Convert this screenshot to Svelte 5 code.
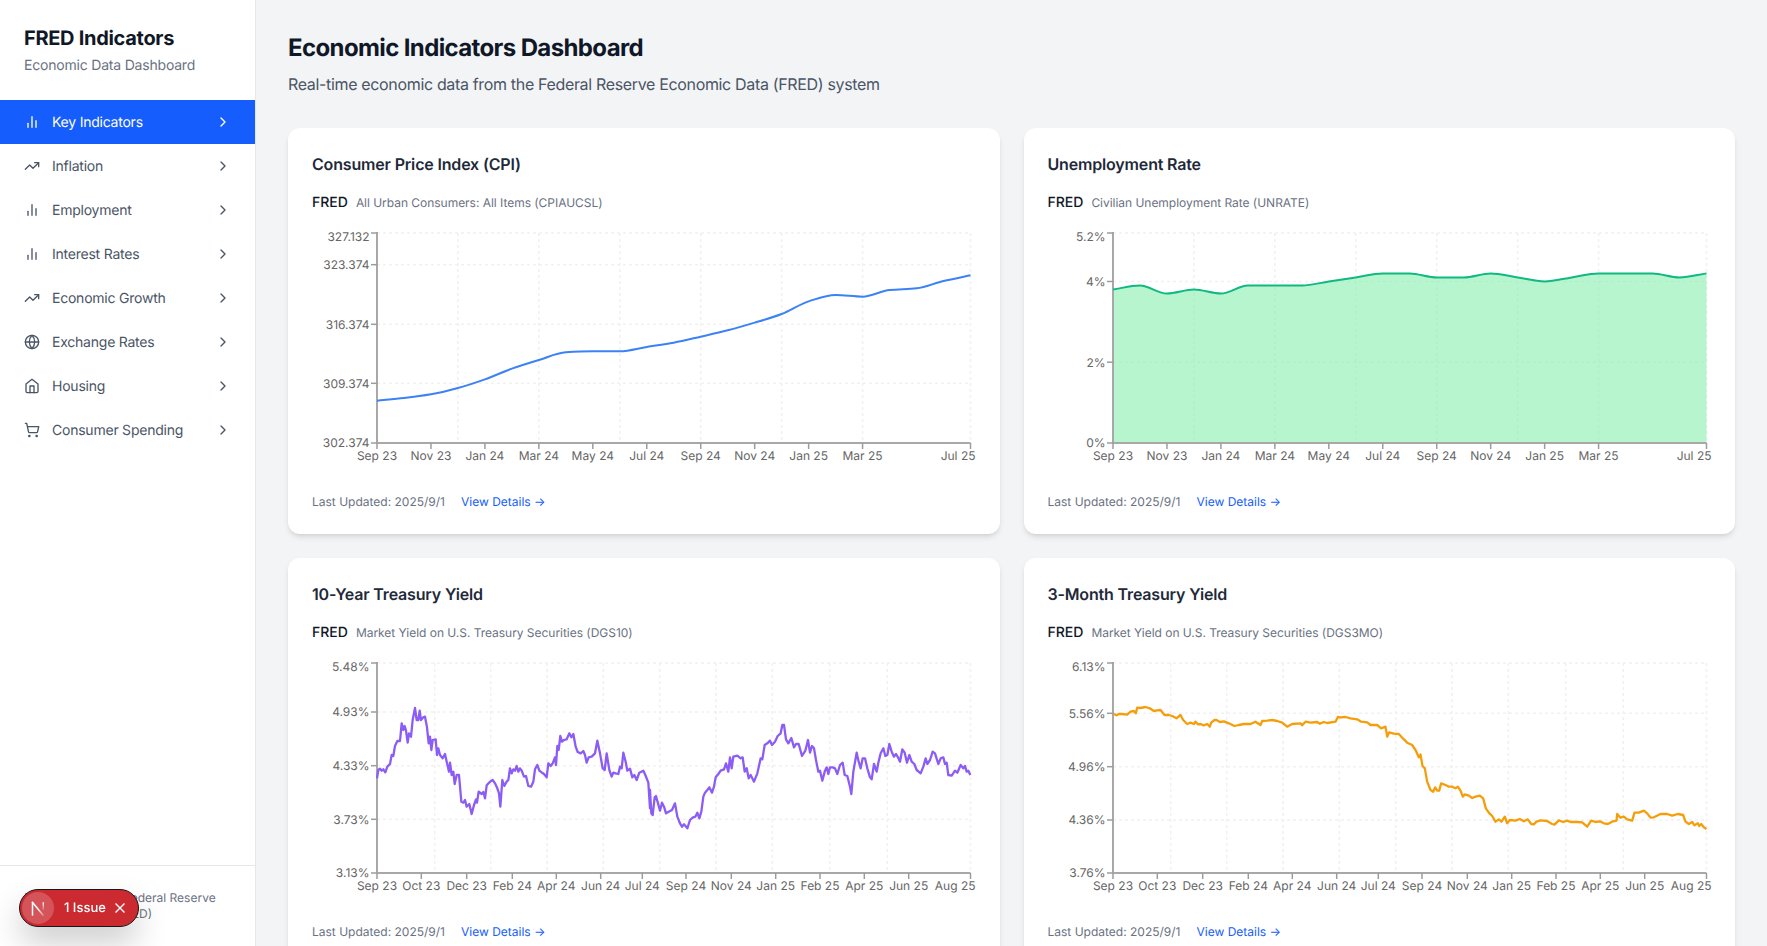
<script>
  const nav = [
    ['Key Indicators', 'bars'], ['Inflation', 'trend'], ['Employment', 'bars'], ['Interest Rates', 'bars'],
    ['Economic Growth', 'trend'], ['Exchange Rates', 'globe'], ['Housing', 'home'], ['Consumer Spending', 'cart']
  ];

  const W = 663.5, L = 65, R = 658.5, T = 5, B = 215;
  const step = (R - L) / 22;
  const idx = (i) => L + i * step;

  function monotone(pts) {
    const n = pts.length;
    const d = [], m = [];
    for (let i = 0; i < n - 1; i++) d.push((pts[i + 1][1] - pts[i][1]) / (pts[i + 1][0] - pts[i][0]));
    m[0] = d[0];
    for (let i = 1; i < n - 1; i++) {
      m[i] = d[i - 1] * d[i] <= 0 ? 0 : (2 * d[i - 1] * d[i]) / (d[i - 1] + d[i]);
    }
    m[n - 1] = d[n - 2];
    let s = `M${pts[0][0]},${pts[0][1]}`;
    for (let i = 0; i < n - 1; i++) {
      const h = (pts[i + 1][0] - pts[i][0]) / 3;
      s += `C${pts[i][0] + h},${pts[i][1] + m[i] * h} ${pts[i + 1][0] - h},${pts[i + 1][1] - m[i + 1] * h} ${pts[i + 1][0]},${pts[i + 1][1]}`;
    }
    return s;
  }

  const parse = (str) => str.trim().split(/;\s*/).filter(Boolean).map((p) => p.split(',').map(Number));

  const monthly = ['Sep 23', 'Nov 23', 'Jan 24', 'Mar 24', 'May 24', 'Jul 24', 'Sep 24', 'Nov 24', 'Jan 25', 'Mar 25', 'Jul 25'];
  const monthlyIdx = [0, 2, 4, 6, 8, 10, 12, 14, 16, 18, 22];
  const monthlyTicks = monthly.map((t, i) => [idx(monthlyIdx[i]), t]);
  const monthlyGrid = [0, 3, 6, 9, 12, 15, 18, 22].map(idx);

  const daily = ['Sep 23', 'Oct 23', 'Dec 23', 'Feb 24', 'Apr 24', 'Jun 24', 'Jul 24', 'Sep 24', 'Nov 24', 'Jan 25', 'Feb 25', 'Apr 25', 'Jun 25', 'Aug 25'];
  const dailyX = [0, 44.3, 89.7, 135.3, 179.3, 223.7, 265.3, 309, 354.3, 398.7, 443, 487.3, 531.7, 593.5];
  const dailyTicks = daily.map((t, i) => [L + dailyX[i], t]);
  const dailyGrid = [0, 57.7, 113.7, 170, 226.3, 282.7, 339, 395.3, 452.7, 510.3, 593.5].map((x) => L + x);

  const cpiZ = [842, 834, 823, 804, 778, 746, 720, 697, 694, 694, 681, 668, 650, 631, 608, 582, 544, 525, 530, 510, 505, 483, 466];
  const cpiPath = monotone(cpiZ.map((z, i) => [idx(i), z / 3 - 108]));

  const un = [3.8, 3.9, 3.7, 3.8, 3.7, 3.9, 3.9, 3.9, 4.0, 4.1, 4.2, 4.2, 4.1, 4.1, 4.2, 4.1, 4.0, 4.1, 4.2, 4.2, 4.2, 4.1, 4.2];
  const unPath = monotone(un.map((v, i) => [idx(i), B - v * (210 / 5.2)]));

  const t10a = `231,415;235,390;240,386;245,392;250,388;256,397;262,380;270,372;275,345;280,348;285,318;292,303;300,303;305,250;310,270;314,258;318,272;323,308;327,280;333,290;338,240;345,204;350,240;355,240;359,212;363,240;370,232;375,230;381,262;386,310;390,290;394,330;398,300;407,298;411,345;415,325;420,345;428,355;435,342;441,370;447,395;450,368;455,405;460,395;464,432;470,405;477,405;484,485;490,488;495,480;500,500;508,492;515,522;522,495;528,478;531,488;536,455;545,462;550,456;555,475;560,436;570,425;578,420;585,430;592,445;597,460;601,500;607,420;613,438;620,425;625,420;630,385;635,400;640,388;645,392;650,378;655,395;660,385;665,392;672,410;678,408;685,438;693,440;700,425;705,388;712,375;718,392;726,398;732,402;740,412;745,370;752,378;758,370;765,352;768,375;772,318;776,330;781,288;786,305;792,300;800,298;808,280;814,292;820,282;827,320;833,336;842,340;850,333;855,345;860,368;866,352;875,350;885,340;892,302;900,340;908,385;914,390;920,340;928,390;935,410;940,398;947,400;955,402;960,380;965,385;970,338;977,365;982,392;990,386;997,412;1003,405;1010,420;1018,398;1030,392;1036,405;1045,428;1050,505`;
  const t10b = `0,450;4,520;8,525;14,472;18,468;24,490;30,512;36,488;42,500;48,520;56,515;66,510;75,490;82,530;90,550;96,560;102,553;112,565;120,540;128,533;136,530;142,518;148,535;154,515;160,470;165,458;172,450;178,442;186,458;192,440;197,412;205,402;212,392;222,388;228,370;235,395;240,352;245,385;250,350;262,347;272,355;278,352;284,395;290,385;296,415;302,405;312,425;322,400;332,355;337,358;344,315;352,310;360,302;366,315;375,305;383,288;392,280;397,255;402,255;408,298;415,310;424,294;432,322;438,312;446,312;456,348;466,332;474,300;480,338;486,318;492,325;498,360;505,395;510,392;517,422;525,392;530,382;535,402;540,382;548,382;555,385;562,402;570,375;578,368;584,405;592,408;600,440;604,462;610,395;620,338;626,365;632,385;638,355;645,355;652,385;660,412;665,418;672,372;680,395;685,368;692,340;700,325;706,348;712,345;718,312;725,335;732,350;738,342;744,352;750,365;757,328;764,338;771,368;778,345;785,365;793,372;800,390;812,400;820,380;827,355;832,372;840,360;848,335;855,340;865,372;872,355;880,352;885,372;890,368;895,405;905,407;915,392;922,398;932,375;940,385;945,378;950,395;955,392;961,405`;
  const t3a = `70,222;78,226;85,222;95,222;110,224;120,215;130,213;136,220;140,203;150,204;165,201;178,205;190,213;200,211;210,210;222,225;235,225;245,228;258,235;270,225;278,240;290,252;300,248;310,252;315,245;322,253;330,252;340,256;350,252;358,260;362,248;372,240;378,240;388,246;400,244;415,250;432,258;445,255;460,252;480,252;495,245;510,255;515,243;530,242;545,240;560,243;575,248;590,260;605,252;630,250;635,256;645,245;660,248;680,246;688,251;700,246;710,249;735,245;742,231;750,232;765,231;780,235;800,238;812,245;830,247;840,255;860,255;872,265;885,260;890,290;896,277;910,281;925,282;938,296;950,308;965,315;975,330;985,352;990,345`;
  const t3b = `0,343;6,378;13,385;20,425;30,450;38,455;44,442;50,452;56,452;62,430;75,435;85,440;95,440;105,445;112,440;120,452;127,470;133,463;145,467;155,474;165,470;178,467;188,475;196,505;205,518;215,528;225,545;235,538;243,545;253,530;260,550;268,540;285,542;298,537;310,544;322,538;332,552;340,553;348,545;360,541;380,543;395,552;402,554;415,541;428,546;440,542;450,546;470,546;485,547;500,560;512,542;525,546;538,544;550,550;562,552;575,545;588,542;590,522;600,533;610,530;620,538;635,542;642,518;655,518;670,512;680,520;690,533;700,532;720,522;740,522;755,527;772,522;788,525;795,545;805,552;815,546;822,556;832,550;836,558;842,552;850,562;858,567`;

  const toPoints = (str, ox) => parse(str).map(([x, y]) => `${(x / 3 + ox).toFixed(2)},${(y / 3 - 18).toFixed(2)}`).join(' ');

  const charts = [
    {
      title: 'Consumer Price Index (CPI)', desc: 'All Urban Consumers: All Items (CPIAUCSL)', color: '#3b82f6',
      path: cpiPath, ticks: monthlyTicks, grid: monthlyGrid,
      y: [[5, '327.132'], [36.7, '323.374'], [96.3, '316.374'], [155.3, '309.374'], [215, '302.374']]
    },
    {
      title: 'Unemployment Rate', desc: 'Civilian Unemployment Rate (UNRATE)', color: '#10b981',
      path: unPath, area: unPath + `L${R},${B}L${L},${B}Z`, ticks: monthlyTicks, grid: monthlyGrid,
      y: [[5, '5.2%'], [53.5, '4%'], [134.2, '2%'], [215, '0%']]
    },
    {
      title: '10-Year Treasury Yield', desc: 'Market Yield on U.S. Treasury Securities (DGS10)', color: '#8b5cf6',
      points: toPoints(t10a, 300 - 312) + ' ' + toPoints(t10b, 650 - 312), ticks: dailyTicks, grid: dailyGrid,
      y: [[5, '5.48%'], [54, '4.93%'], [107.7, '4.33%'], [161.3, '3.73%'], [215, '3.13%']]
    },
    {
      title: '3-Month Treasury Yield', desc: 'Market Yield on U.S. Treasury Securities (DGS3MO)', color: '#f59e0b',
      points: toPoints(t3a, 1090 - 1047.5) + ' ' + toPoints(t3b, 1420 - 1047.5), ticks: dailyTicks, grid: dailyGrid,
      y: [[5, '6.13%'], [55.3, '5.56%'], [108.7, '4.96%'], [162, '4.36%'], [215, '3.76%']]
    }
  ];
</script>

<div class="layout">
  <aside class="sidebar">
    <div class="brand">
      <h2>FRED Indicators</h2>
      <p>Economic Data Dashboard</p>
    </div>
    <nav>
      {#each nav as [label, icon], i}
        <div class="item" class:active={i === 0}>
          <svg class="ic" viewBox="0 0 24 24">
            {#if icon === 'bars'}
              <line x1="18" x2="18" y1="20" y2="10" /><line x1="12" x2="12" y1="20" y2="4" /><line x1="6" x2="6" y1="20" y2="14" />
            {:else if icon === 'trend'}
              <polyline points="22 7 13.5 15.5 8.5 10.5 2 17" /><polyline points="16 7 22 7 22 13" />
            {:else if icon === 'globe'}
              <circle cx="12" cy="12" r="10" /><path d="M12 2a14.5 14.5 0 0 0 0 20 14.5 14.5 0 0 0 0-20" /><path d="M2 12h20" />
            {:else if icon === 'home'}
              <path d="m3 9 9-7 9 7v11a2 2 0 0 1-2 2H5a2 2 0 0 1-2-2z" /><polyline points="9 22 9 12 15 12 15 22" />
            {:else}
              <circle cx="8" cy="21" r="1" /><circle cx="19" cy="21" r="1" /><path d="M2.05 2.05h2l2.66 12.42a2 2 0 0 0 2 1.58h9.78a2 2 0 0 0 1.95-1.57l1.65-7.43H5.12" />
            {/if}
          </svg>
          <span class="label">{label}</span>
          <svg class="ic" viewBox="0 0 24 24"><path d="m9 18 6-6-6-6" /></svg>
        </div>
      {/each}
    </nav>
    <div class="side-foot">Data provided by Federal Reserve Economic Data (FRED)</div>
  </aside>

  <main>
    <h1>Economic Indicators Dashboard</h1>
    <p class="lead">Real-time economic data from the Federal Reserve Economic Data (FRED) system</p>
    <div class="grid">
      {#each charts as c}
        <section class="card">
          <h3>{c.title}</h3>
          <div class="source"><strong>FRED</strong><span>{c.desc}</span></div>
          <svg class="chart" viewBox="0 0 {W} 250">
            <g class="gridlines">
              {#each c.y as [y]}<line x1={L} x2={R} y1={y} y2={y} />{/each}
              {#each c.grid as x}<line x1={x} x2={x} y1={T} y2={B} />{/each}
            </g>
            {#if c.area}<path d={c.area} fill="#86efac" fill-opacity="0.6" />{/if}
            <line class="axis" x1={L} x2={L} y1={T - 1} y2={B} />
            <line class="axis" x1={L - 1} x2={R} y1={B} y2={B} />
            {#each c.y as [y, t], i}
              <line class="tick" x1={L - 6} x2={L} y1={y} y2={y} />
              <text x={L - 7.5} y={i === 0 ? y + 8.4 : y + 4.3} text-anchor="end">{t}</text>
            {/each}
            {#each c.ticks as [x, t], i}
              <line class="tick" x1={x} x2={x} y1={B} y2={B + 6} />
              {#if i === c.ticks.length - 1}
                <text x={W} y={B + 16.5} text-anchor="end">{t}</text>
              {:else}
                <text x={x} y={B + 16.5} text-anchor="middle">{t}</text>
              {/if}
            {/each}
            {#if c.path}
              <path d={c.path} fill="none" stroke={c.color} stroke-width="2" />
            {:else}
              <polyline points={c.points} fill="none" stroke={c.color} stroke-width="2.3" stroke-linejoin="round" />
            {/if}
          </svg>
          <div class="foot"><span>Last Updated: 2025/9/1</span><a href="#details">View Details →</a></div>
        </section>
      {/each}
    </div>
  </main>

  <div class="badge">
    <span class="logo">
      <svg viewBox="0 0 16 16" width="16" height="16">
        <defs>
          <linearGradient id="stemfade" x1="0" y1="0" x2="0" y2="1"><stop offset="0" stop-color="#fff" /><stop offset="1" stop-color="#fff" stop-opacity="0.1" /></linearGradient>
          <linearGradient id="diagfade" x1="0" y1="0" x2="1" y2="1"><stop offset="0.55" stop-color="#fff" /><stop offset="1" stop-color="#fff" stop-opacity="0.25" /></linearGradient>
        </defs>
        <path d="M2.5 15.7V2.3" fill="none" stroke="#fff" stroke-width="1.5" />
        <path d="M2 1.8L13.5 15.7" fill="none" stroke="url(#diagfade)" stroke-width="1.5" />
        <rect x="12.6" y="2.3" width="1.4" height="8" fill="url(#stemfade)" />
      </svg>
    </span>
    <span class="issue">1 Issue</span>
    <svg class="close" viewBox="0 0 14 14" width="14" height="14"><path d="M2.5 2.5l9 9M11.5 2.5l-9 9" fill="none" stroke="#fff" stroke-width="1.4" /></svg>
  </div>
</div>

<style>
  :global(body) { margin: 0; background: #f3f4f6; font-family: Inter, "Liberation Sans", sans-serif; text-rendering: geometricPrecision; }
  .layout { display: flex; height: 100vh; overflow: hidden; }
  .sidebar { width: 256px; flex: none; box-sizing: border-box; background: #fff; border-right: 1px solid #e5e7eb; display: flex; flex-direction: column; }
  .brand { padding: 24px 24px 22px; height: 100px; box-sizing: border-box; }
  .brand h2 { margin: 0; font-size: 20px; line-height: 28px; font-weight: 700; color: #101828; letter-spacing: -0.3px; }
  .brand p { margin: 4px 0 0; font-size: 14px; line-height: 20px; color: #6a7282; letter-spacing: -0.2px; }
  nav { flex: 1; }
  .item { height: 44px; display: flex; align-items: center; gap: 12px; padding: 0 24px; font-size: 14px; color: #4a5565; letter-spacing: -0.23px; }
  .item.active { background: #155dfc; color: #fff; }
  .label { flex: 1; }
  .ic { width: 16px; height: 16px; fill: none; stroke: currentColor; stroke-width: 2; stroke-linecap: round; stroke-linejoin: round; flex: none; }
  .side-foot { border-top: 1px solid #e5e7eb; padding: 24px; font-size: 12px; line-height: 16px; color: #6a7282; }

  main { flex: 1; min-width: 0; padding: 32px; box-sizing: border-box; }
  h1 { margin: 0; font-size: 24px; line-height: 32px; font-weight: 700; color: #101828; letter-spacing: -0.62px; }
  .lead { margin: 8px 0 32px; font-size: 16px; line-height: 24px; color: #4a5565; letter-spacing: -0.34px; }
  .grid { display: grid; grid-template-columns: 1fr 1fr; gap: 24px; }
  .card { background: #fff; border-radius: 12px; padding: 24px; box-shadow: 0 4px 6px -1px rgba(0,0,0,.1), 0 2px 4px -2px rgba(0,0,0,.1); min-width: 0; }
  h3 { margin: 0 0 16px; font-size: 16px; line-height: 24px; font-weight: 600; color: #1e2939; letter-spacing: -0.17px; }
  .source { display: flex; align-items: center; gap: 8px; height: 20px; margin-bottom: 16px; }
  .source strong { font-size: 14px; font-weight: 500; color: #101828; }
  .source span { font-size: 12px; color: #6a7282; letter-spacing: -0.03px; }
  .chart { display: block; width: 100%; height: 250px; overflow: visible; }
  .chart text { font-size: 12px; fill: #666; }
  .gridlines line { stroke: #f1f1f1; stroke-width: 1.6; stroke-dasharray: 3 3; }
  .axis { stroke: #a8a8a8; stroke-width: 2; }
  .tick { stroke: #9c9c9c; stroke-width: 1.5; }
  .foot { display: flex; gap: 16px; margin-top: 16px; font-size: 12px; line-height: 16px; color: #6a7282; }
  .foot a { color: #155dfc; text-decoration: none; }

  .badge { position: fixed; left: 19px; bottom: 19px; width: 120px; height: 38px; box-sizing: border-box; border-radius: 19px; background: #ca2a30; border: 1px solid #171717; box-shadow: 0 16px 32px rgba(0,0,0,.2); display: flex; align-items: center; color: #fff; }
  .logo { width: 32px; height: 32px; margin-left: 2px; border-radius: 50%; background: rgba(255,255,255,.2); display: flex; align-items: center; justify-content: center; flex: none; }
  .issue { margin-left: 10px; font-size: 13px; font-weight: 500; white-space: nowrap; }
  .close { margin-left: 7px; flex: none; }
</style>
